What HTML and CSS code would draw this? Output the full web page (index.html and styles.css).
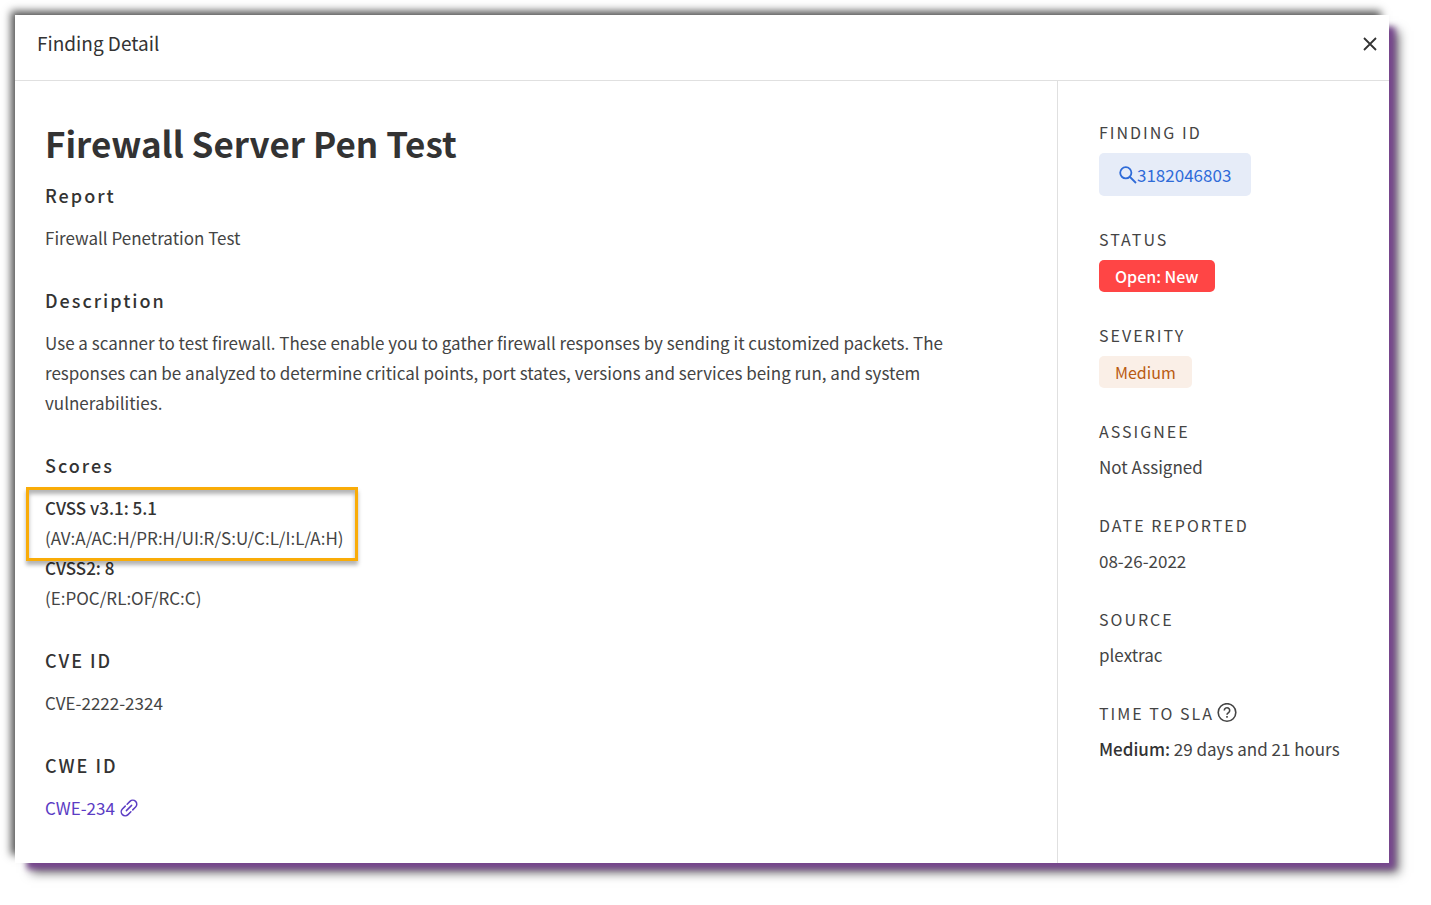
FILE: index.html
```html
<!DOCTYPE html>
<html lang="en">

<head>
    <meta charset="UTF-8">
    <meta name="viewport" content="width=device-width, initial-scale=1.0">
    <title>Finding Detail</title>
    <link rel="stylesheet" href="styles.css">
</head>

<body>
    <div class="modal" role="dialog" aria-labelledby="modalTitle">
        <header class="modal-header">
            <h2 class="modal-title" id="modalTitle">Finding Detail</h2>
            <button class="close-button" type="button" aria-label="Close">
                <svg width="14" height="16" viewBox="0 0 14 16" fill="none" stroke="currentColor" stroke-width="1.8">
                    <path d="M1 3l12 12M13 3L1 15" />
                </svg>
            </button>
        </header>
        <div class="modal-body">
            <main class="content">
                <h1>Firewall Server Pen Test</h1>
                <section>
                    <h3>Report</h3>
                    <p>Firewall Penetration Test</p>
                </section>
                <section>
                    <h3>Description</h3>
                    <p>Use a scanner to test firewall. These enable you to gather firewall responses by sending it customized packets. The responses can be analyzed to determine critical points, port states, versions and services being run, and system vulnerabilities.</p>
                </section>
                <section>
                    <h3>Scores</h3>
                    <div class="score highlighted">
                        <p><strong>CVSS v3.1: 5.1</strong></p>
                        <p>(AV:A/AC:H/PR:H/UI:R/S:U/C:L/I:L/A:H)</p>
                    </div>
                    <div class="score">
                        <p><strong>CVSS2: 8</strong></p>
                        <p>(E:POC/RL:OF/RC:C)</p>
                    </div>
                </section>
                <section>
                    <h3>CVE ID</h3>
                    <p>CVE-2222-2324</p>
                </section>
                <section>
                    <h3>CWE ID</h3>
                    <p>
                        <a class="cwe-link" href="#">CWE-234
                            <svg width="18" height="18" viewBox="0 0 24 24" fill="none" stroke="currentColor" stroke-width="2" stroke-linecap="round" stroke-linejoin="round">
                                <path d="M8.500 15.500l7-7" />
                                <path d="M9.500 7l3.800-3.800a5.300 5.300 0 0 1 7.500 7.500L17 14.500" />
                                <path d="M14.500 17l-3.800 3.800a5.300 5.300 0 0 1-7.500-7.500L7 9.500" />
                            </svg>
                        </a>
                    </p>
                </section>
            </main>
            <aside class="sidebar">
                <div class="field">
                    <h4>FINDING ID</h4>
                    <button class="id-button" type="button">
                        <svg width="18" height="18" viewBox="0 0 18 18" fill="none" stroke="currentColor" stroke-width="1.8">
                            <circle cx="6.800" cy="6.800" r="5.600" />
                            <path d="M11 11l6 6" />
                        </svg>
                        <span>3182046803</span>
                    </button>
                </div>
                <div class="field">
                    <h4>STATUS</h4>
                    <span class="badge badge-open">Open: New</span>
                </div>
                <div class="field">
                    <h4>SEVERITY</h4>
                    <span class="badge badge-medium">Medium</span>
                </div>
                <div class="field">
                    <h4>ASSIGNEE</h4>
                    <p>Not Assigned</p>
                </div>
                <div class="field">
                    <h4>DATE REPORTED</h4>
                    <p>08-26-2022</p>
                </div>
                <div class="field">
                    <h4>SOURCE</h4>
                    <p>plextrac</p>
                </div>
                <div class="field">
                    <h4>TIME TO SLA
                        <svg width="20" height="20" viewBox="0 0 20 20" fill="none" stroke="currentColor" stroke-width="1.6">
                            <circle cx="10" cy="9.500" r="8.800" />
                            <path d="M7.300 7.500a2.700 2.700 0 1 1 4.300 2.100c-1 .7-1.600 1.100-1.600 2.200" />
                            <path d="M10 13v1.700" />
                        </svg>
                    </h4>
                    <p><strong>Medium:</strong> 29 days and 21 hours</p>
                </div>
            </aside>
        </div>
    </div>
</body>

</html>
```
FILE: styles.css
```css
:root {
    --heading-color: #333;
    --text-color: #444;
    --line-color: #e0e0e0;
    --purple: #77468f;
    --highlight: #f9ac08;
}

* {
    box-sizing: border-box;
}

body {
    display: flex;
    min-height: 100vh;
    margin: 0;
    padding: 15px 42px 42px 15px;
    background-color: #fff;
    color: var(--text-color);
    font-family: "Noto Sans CJK SC", "Noto Sans", sans-serif;
    font-size: 17px;
    line-height: 30px;
}

h1, h2, h3, h4, p {
    margin: 0;
}

h1, h2, h3, strong {
    color: var(--heading-color);
}

strong {
    font-weight: 500;
}

button {
    border: none;
    font: inherit;
    cursor: pointer;
}

.modal {
    display: flex;
    flex: 1;
    flex-direction: column;
    background-color: #fff;
    box-shadow: -6px -6px 8px -2px #555, 9px 9px 6px -3px var(--purple), 13px 13px 10px -3px #777;
}

.modal-header {
    display: flex;
    align-items: center;
    justify-content: space-between;
    padding: 13px 12px 22px 22px;
    border-bottom: 1px solid var(--line-color);
}

.modal-title {
    font-size: 19px;
    font-weight: 400;
}

.close-button {
    display: flex;
    padding: 0;
    background: none;
    color: var(--heading-color);
}

.modal-body {
    display: flex;
    flex: 1;
}

.content {
    flex: 1;
    padding: 38px 48px 6px 30px;
}

.content section {
    margin-bottom: 34px;
}

h1 {
    margin-bottom: 15px;
    font-size: 35px;
    font-weight: 700;
    line-height: 48px;
}

h3 {
    margin-bottom: 15px;
    font-size: 18px;
    font-weight: 500;
    line-height: 26px;
    letter-spacing: 2px;
}

.highlighted {
    position: relative;
    width: fit-content;
}

/* frame drawn around the current score */
.highlighted::after {
    content: "";
    position: absolute;
    inset: -6px -14px -8px -19px;
    border: 3px solid var(--highlight);
    box-shadow: 0 4px 4px rgba(0, 0, 0, 0.3), inset 0 4px 4px rgba(0, 0, 0, 0.3);
}

.cwe-link {
    display: inline-flex;
    align-items: center;
    gap: 5px;
    color: #5b3cc4;
    text-decoration: none;
}

.sidebar {
    display: flex;
    flex: 0 0 332px;
    flex-direction: column;
    gap: 31px;
    padding: 39px 20px 40px 41px;
    border-left: 1px solid var(--line-color);
}

.field {
    display: flex;
    flex-direction: column;
    align-items: flex-start;
    gap: 9px;
}

h4 {
    display: flex;
    align-items: center;
    gap: 3px;
    font-size: 16px;
    font-weight: 400;
    line-height: 24px;
    letter-spacing: 2px;
}

.id-button {
    display: flex;
    align-items: center;
    padding: 7px 20px 6px;
    border-radius: 5px;
    background-color: #e6ecf8;
    color: #2f6bd8;
}

.badge {
    padding: 0 16px;
    border-radius: 5px;
    font-size: 16px;
    line-height: 32px;
}

.badge-open {
    background-color: #ff4545;
    color: #fff;
    font-weight: 500;
}

.badge-medium {
    background-color: #faefe7;
    color: #b95a10;
}
```
